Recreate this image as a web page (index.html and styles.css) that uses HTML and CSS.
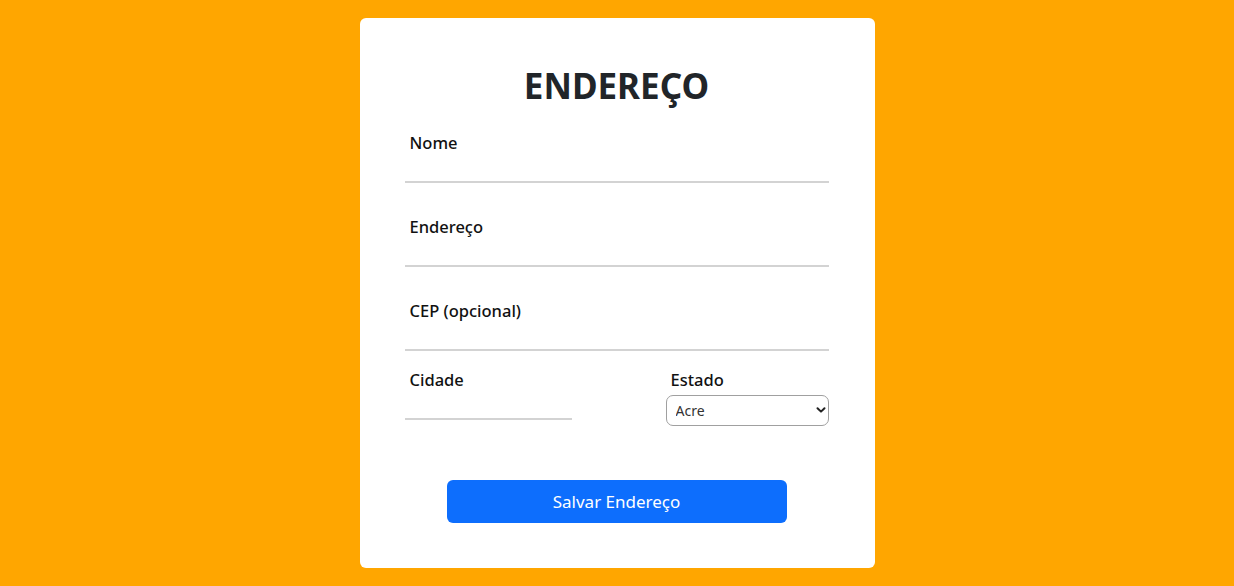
FILE: index.html
```html
<!DOCTYPE html>
<html lang="pt-BR">
<head>
<meta charset="utf-8">
<title>Endereço</title>
<link rel="stylesheet" href="styles.css">
</head>
<body>
<main class="page">
  <form class="card">
    <h1 class="title">ENDEREÇO</h1>
    <div class="field">
      <label class="label" for="nome">Nome</label>
      <input class="line-input" id="nome" type="text">
    </div>
    <div class="field">
      <label class="label" for="end">Endereço</label>
      <input class="line-input" id="end" type="text">
    </div>
    <div class="field">
      <label class="label" for="cep">CEP (opcional)</label>
      <input class="line-input" id="cep" type="text">
    </div>
    <div class="row">
      <div class="col col-city">
        <label class="label" for="cidade">Cidade</label>
        <input class="line-input" id="cidade" type="text">
      </div>
      <div class="col col-state">
        <label class="label" for="estado">Estado</label>
        <div class="select-wrap">
          <select class="select" id="estado">
            <option>Acre</option>
          </select>
          <svg class="chev" width="10" height="8" viewBox="0 0 10 8"><path d="M1.5 2.2 L5 5.6 L8.5 2.2" fill="none" stroke="#222" stroke-width="2" stroke-linecap="round" stroke-linejoin="round"/></svg>
        </div>
      </div>
    </div>
    <div class="actions">
      <button class="btn" type="button">Salvar Endereço</button>
    </div>
  </form>
</main>
</body>
</html>
```
FILE: styles.css
```css
* { box-sizing: border-box; }
html, body { margin: 0; padding: 0; }
body {
  background: #ffa600;
  font-family: "Noto Sans", "Open Sans", sans-serif;
  color: #212529;
  width: 1234px;
  height: 586px;
  overflow: hidden;
}
.page {
  display: flex;
  justify-content: center;
  padding-top: 18px;
}
.card {
  width: 515px;
  height: 550px;
  background: #fff;
  border-radius: 6px;
  padding: 41px 46px 0 45px;
  display: flex;
  flex-direction: column;
}
.title {
  margin: 0 0 18px;
  text-align: center;
  font-size: 35px;
  font-weight: 700;
  line-height: 54px;
  color: #212529;
}
.field {
  display: flex;
  flex-direction: column;
  margin-bottom: 32px;
}
.field:nth-of-type(3) { margin-bottom: 17px; }
.label {
  padding-left: 5px;
  font-size: 16.5px;
  font-weight: 500;
  line-height: 24px;
  color: #111;
}
.line-input {
  border: none;
  border-bottom: 2px solid #d3d3d3;
  height: 28px;
  padding: 0 5px;
  font: inherit;
  outline: none;
  background: transparent;
}
.row {
  display: flex;
  justify-content: space-between;
}
.col { display: flex; flex-direction: column; }
.col-city { width: 167px; }
.col-state { width: 163px; }
.select-wrap { position: relative; margin-top: 3px; }
.select {
  appearance: none;
  -webkit-appearance: none;
  display: block;
  width: 163px;
  height: 31px;
  border: 1px solid #a0a0a0;
  border-radius: 7px;
  background: #fff;
  padding: 0 9px;
  font-family: "Noto Sans", "Open Sans", sans-serif;
  font-size: 14px;
  color: #333;
}
.chev {
  position: absolute;
  right: 3px;
  top: 11px;
  pointer-events: none;
}
.actions {
  display: flex;
  justify-content: center;
  margin-top: 54px;
}
.btn {
  width: 340px;
  height: 43px;
  border: none;
  border-radius: 6px;
  background: #0d6efd;
  color: #fff;
  font-family: "Noto Sans", "Open Sans", sans-serif;
  font-size: 17px;
  padding: 0;
}
```
